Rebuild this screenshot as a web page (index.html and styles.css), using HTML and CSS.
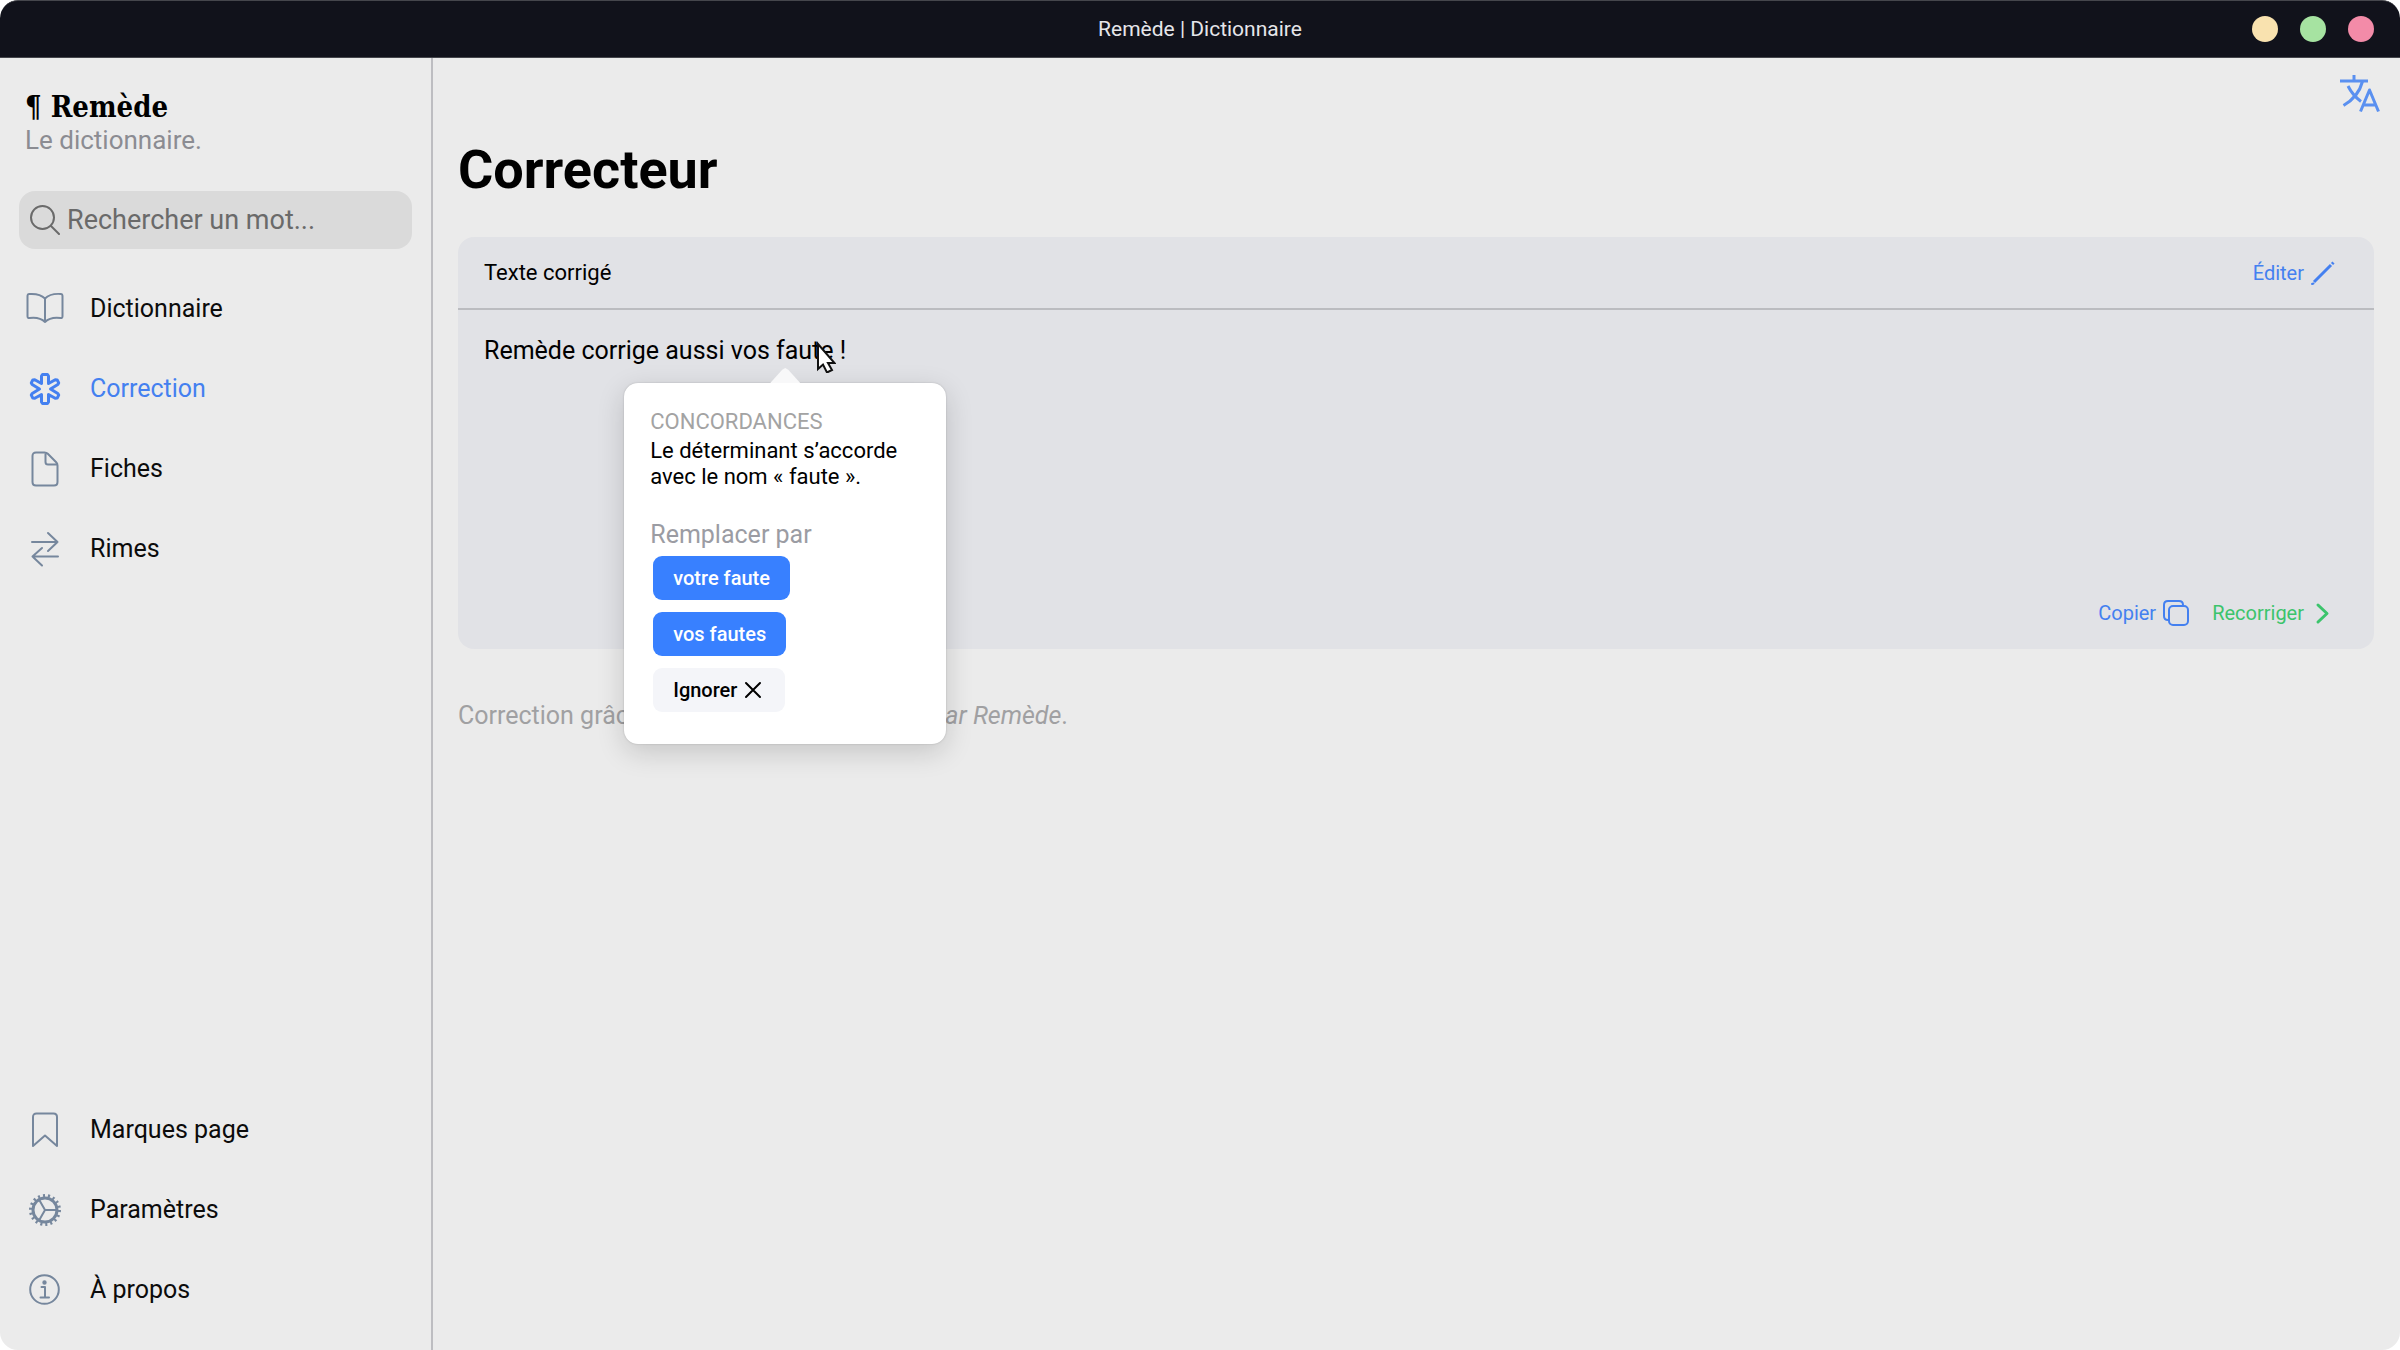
FILE: index.html
```html
<!DOCTYPE html>
<html lang="fr">
<head>
<meta charset="utf-8">
<meta name="viewport" content="width=device-width, initial-scale=1">
<title>Remède | Dictionnaire</title>
<link rel="stylesheet" href="styles.css">
</head>
<body>
<div class="window">
  <header class="titlebar">
    <span class="titlebar-title">Remède | Dictionnaire</span>
    <div class="window-controls">
      <button type="button" class="dot dot-yellow" aria-label="Réduire"></button>
      <button type="button" class="dot dot-green" aria-label="Agrandir"></button>
      <button type="button" class="dot dot-pink" aria-label="Fermer"></button>
    </div>
  </header>
  <div class="app">
    <aside class="sidebar">
      <div class="brand">
        <div class="brand-name">¶ Remède</div>
        <div class="brand-tagline">Le dictionnaire.</div>
      </div>
      <label class="search">
        <svg class="search-icon" viewBox="0 0 30 30" aria-hidden="true"><circle cx="12.500" cy="12.500" r="11.500"/><path d="M21 21l8 8"/></svg>
        <input class="search-input" type="search" placeholder="Rechercher un mot..." aria-label="Rechercher un mot">
      </label>
      <nav class="nav">
        <a class="nav-item" href="#dictionnaire">
          <svg class="nav-icon" viewBox="0 0 38 38" aria-hidden="true"><path d="M19 8.500C15.500 5 9 3.500 3 4c-1 .1-1.500.7-1.500 1.700v20.600c0 1.200.7 1.900 2 1.700C9 27.300 15.500 28.500 19 32c3.500-3.500 10-4.700 15.500-4 1.300.2 2-.5 2-1.700V5.700c0-1-.5-1.600-1.500-1.700-6-.5-12.500 1-16 4.500zM19 8.500V32"/></svg>
          <span>Dictionnaire</span>
        </a>
        <a class="nav-item is-active" href="#correction">
          <svg class="nav-icon" viewBox="0 0 38 38" aria-hidden="true"><path d="M16.500 4.500h5l1 1.500v7.500l6.700-3.800 2 .2 1.500 3-.9 1.600-7.300 4.500 7.300 4.500.9 1.600-1.500 3-2 .2-6.700-3.800V32l-1 1.500h-5l-1-1.500v-7.500l-6.700 3.800-2-.2-1.500-3 .9-1.600 7.300-4.500-7.300-4.500-.9-1.600 1.500-3 2-.2 6.700 3.800V6z"/></svg>
          <span>Correction</span>
        </a>
        <a class="nav-item" href="#fiches">
          <svg class="nav-icon" viewBox="0 0 38 38" aria-hidden="true"><path d="M10 2.500h8.500c1.500 0 2.300.3 3.300 1.300l8.400 8.400c1 1 1.300 1.800 1.300 3.300V32c0 2.300-1.200 3.500-3.500 3.500H10c-2.300 0-3.500-1.200-3.500-3.500V6c0-2.300 1.200-3.500 3.500-3.500zM19.500 3v9c0 1.700.8 2.500 2.500 2.500h9"/></svg>
          <span>Fiches</span>
        </a>
        <a class="nav-item" href="#rimes">
          <svg class="nav-icon" viewBox="0 0 38 38" aria-hidden="true"><path d="M6 12h25.500M22 3l9.500 9-9.500 9M32 26.500H6.500M16 18l-9.500 8.500 9.500 9"/></svg>
          <span>Rimes</span>
        </a>
      </nav>
      <nav class="nav nav-bottom">
        <a class="nav-item" href="#marques">
          <svg class="nav-icon" viewBox="0 0 38 38" aria-hidden="true"><path d="M10.500 2.500h17c2.300 0 3.500 1.200 3.500 3.500v29L19 24.500 7 35V6c0-2.300 1.200-3.500 3.500-3.500z"/></svg>
          <span>Marques page</span>
        </a>
        <a class="nav-item" href="#parametres">
          <svg class="nav-icon" viewBox="0 0 38 38" aria-hidden="true"><circle class="gear-ring" cx="19" cy="19" r="12"/><circle class="gear-teeth" cx="19" cy="19" r="14"/><path d="M19 19h12M19 19l-6-10.500M19 19l-6 10.500"/></svg>
          <span>Paramètres</span>
        </a>
        <a class="nav-item" href="#a-propos">
          <svg class="nav-icon" viewBox="0 0 38 38" aria-hidden="true"><circle cx="18.500" cy="18.500" r="14.300"/><path d="M15.500 16H19v10.500M14.500 26.500h8.500"/><circle class="icon-fill" cx="18.500" cy="11.500" r="1.200"/></svg>
          <span>À propos</span>
        </a>
      </nav>
    </aside>
    <main class="content">
      <div class="toolbar">
        <button type="button" class="lang-button" aria-label="Langue">
          <svg class="lang-icon" viewBox="0 0 40 40" aria-hidden="true"><path d="M0 7h28M14 1v6M22.500 7.500C20 17 13 26 3.500 31.500M8 12c3 6 7 11 13 15.500M20.500 37.500l9-21.500 9 21.500M23.500 31h12.500"/></svg>
        </button>
      </div>
      <h1 class="page-title">Correcteur</h1>
      <section class="card">
        <div class="card-header">
          <h2 class="card-title">Texte corrigé</h2>
          <button type="button" class="text-button">Éditer
            <svg class="edit-icon" viewBox="0 0 26 26" aria-hidden="true"><path class="edit-stroke" d="M4 22L21 5"/><path class="edit-stroke" d="M22 4l1.500-1.500"/><path d="M2 24l1.500-.5"/></svg>
          </button>
        </div>
        <div class="card-body">
          <p class="corrected-text">Remède corrige aussi <span class="mistake">vos faute&nbsp;<svg class="cursor" viewBox="0 0 20 32" aria-hidden="true"><path d="M2 3v25l5-4.500 4 8 5-2.500-4-7h6.500z"/></svg><span class="popover" role="dialog" aria-label="Concordances">
            <span class="popover-type">CONCORDANCES</span>
            <span class="popover-message">Le déterminant s’accorde avec le nom « faute ».</span>
            <span class="popover-label">Remplacer par</span>
            <button type="button" class="chip chip-primary">votre faute</button>
            <button type="button" class="chip chip-primary">vos fautes</button>
            <button type="button" class="chip">Ignorer <svg class="close-icon" viewBox="0 0 24 24" aria-hidden="true"><path d="M5 5l14 14M19 5L5 19"/></svg></button>
          </span></span>!</p>
        </div>
        <div class="card-footer">
          <button type="button" class="text-button">Copier
            <svg class="copy-icon" viewBox="0 0 28 28" aria-hidden="true"><rect x="7" y="7" width="19" height="19" rx="4"/><path d="M21 6.500V6c0-2.500-1.500-4-4-4H6C3.500 2 2 3.500 2 6v11c0 2.500 1.500 4 4 4h.5"/></svg>
          </button>
          <button type="button" class="text-button text-button-success">Recorriger
            <svg class="chevron-icon" viewBox="0 0 26 26" aria-hidden="true"><path d="M8 5l9 8.500L8 22"/></svg>
          </button>
        </div>
      </section>
      <p class="credit">Correction grâce à <em>Grammalecte, configuré par Remède</em>.</p>
    </main>
  </div>
</div>
</body>
</html>
```
FILE: styles.css
```css
*, *::before, *::after { box-sizing: border-box; }

body {
  margin: 0;
  background: #fff;
  color: #000;
  font: 25px/32px Roboto, "Liberation Sans", sans-serif;
}

h1, h2, p { margin: 0; }

button {
  padding: 0;
  border: 0;
  background: none;
  color: inherit;
  font: inherit;
  cursor: pointer;
}

svg {
  display: block;
  flex: none;
  fill: none;
  stroke: currentColor;
  stroke-width: 2;
  stroke-linecap: round;
  stroke-linejoin: round;
}

.window {
  display: flex;
  flex-direction: column;
  min-height: 100vh;
  border-radius: 18px;
  background: #ebebeb;
  overflow: hidden;
}

/* Title bar */
.titlebar {
  display: grid;
  grid-template-columns: 1fr auto 1fr;
  align-items: center;
  height: 58px;
  padding: 0 26px;
  border-top: 1px solid #45464c;
  border-bottom: 1px solid #45464c;
  border-radius: 18px 18px 0 0;
  background: #11121b;
}

.titlebar-title {
  grid-column: 2;
  color: #e6e6ea;
  font-size: 21px;
}

.window-controls {
  display: flex;
  justify-content: flex-end;
  gap: 22px;
}

.dot {
  width: 26px;
  height: 26px;
  border-radius: 50%;
}

.dot-yellow { background: #f9e2af; }
.dot-green { background: #a6e3a1; }
.dot-pink { background: #f38ba8; }

.app {
  display: flex;
  flex: 1;
}

/* Sidebar */
.sidebar {
  display: flex;
  flex-direction: column;
  flex: none;
  width: 433px;
  padding: 32px 19px 20px;
  border-right: 2px solid #bdbdc1;
}

.brand {
  padding: 0 6px;
  margin-bottom: 35px;
}

.brand-name {
  font: bold 29px/34px "DejaVu Serif Condensed", "DejaVu Serif", serif;
}

.brand-tagline {
  color: #8b8c92;
  font-size: 26px;
}

.search {
  display: flex;
  align-items: center;
  gap: 7px;
  height: 58px;
  padding: 0 11px;
  margin-bottom: 20px;
  border-radius: 16px;
  background: #dadada;
  color: #6a6a6a;
}

.search-icon {
  width: 30px;
  height: 30px;
}

.search-input {
  flex: 1;
  min-width: 0;
  padding: 0;
  border: 0;
  outline: 0;
  background: none;
  color: #000;
  font: 27px/32px Roboto, "Liberation Sans", sans-serif;
}

.search-input::placeholder {
  color: #6a6a6a;
  opacity: 1;
}

.nav-bottom { margin-top: auto; }

.nav-item {
  display: flex;
  align-items: center;
  gap: 26px;
  height: 80px;
  padding: 0 7px;
  color: #0c0c0c;
  text-decoration: none;
}

.nav-icon {
  width: 38px;
  height: 38px;
  color: #76879d;
}

.icon-fill { fill: currentColor; }

.gear-ring { stroke-width: 3; }

.gear-teeth {
  stroke-width: 4;
  stroke-linecap: butt;
  stroke-dasharray: 2 2.888;
}

.is-active,
.is-active .nav-icon { color: #4480f0; }

.is-active .nav-icon { stroke-width: 3; }

/* Main content */
.content {
  flex: 1;
  padding: 16px 26px 16px 25px;
}

.toolbar {
  display: flex;
  justify-content: flex-end;
}

.lang-button { margin-right: -6px; }

.lang-icon {
  width: 40px;
  height: 40px;
  color: #5a90f0;
  stroke-width: 3;
  stroke-linecap: butt;
}

.page-title {
  margin: 24px 0 35px;
  font-size: 54px;
  line-height: 64px;
}

.card {
  display: flex;
  flex-direction: column;
  min-height: 412px;
  border-radius: 16px;
  background: #e1e2e6;
}

.card-header {
  display: flex;
  align-items: center;
  justify-content: space-between;
  height: 73px;
  padding: 0 38px 0 26px;
  border-bottom: 2px solid #bbbcc0;
}

.card-title {
  font-size: 22px;
  font-weight: 400;
}

.card-body {
  flex: 1;
  padding: 25px 26px;
}

.card-footer {
  display: flex;
  justify-content: flex-end;
  gap: 22px;
  padding: 0 38px 20px;
}

.text-button {
  display: flex;
  align-items: center;
  gap: 6px;
  color: #4480f0;
  font-size: 20px;
}

.text-button-success { color: #3cc46c; }

.edit-icon { width: 26px; height: 26px; }
.edit-stroke { stroke-width: 3; stroke-linecap: butt; }
.copy-icon { width: 28px; height: 28px; }
.chevron-icon { width: 26px; height: 26px; stroke-width: 3; }

.mistake {
  position: relative;
}

.cursor {
  position: absolute;
  top: 5px;
  right: 4px;
  z-index: 3;
  width: 20px;
  height: 32px;
  fill: #fff;
  stroke: #111;
  stroke-linejoin: miter;
}

/* Suggestion popover, centred under the marked words */
.popover {
  position: absolute;
  top: 100%;
  left: 50%;
  z-index: 2;
  display: flex;
  flex-direction: column;
  align-items: flex-start;
  width: 322px;
  margin-top: 18px;
  padding: 23px 26px 20px;
  border-radius: 14px;
  background: #fff;
  box-shadow: 0 8px 28px rgba(0, 0, 0, .16), 0 0 2px rgba(0, 0, 0, .2);
  transform: translateX(-50%);
}

.popover::before {
  content: "";
  position: absolute;
  bottom: 100%;
  left: 50%;
  width: 30px;
  height: 15px;
  margin-left: -15px;
  background: #f8f8f9;
  clip-path: polygon(0 100%, 40% 12%, 50% 0, 60% 12%, 100% 100%);
}

.popover-type {
  color: #a3a3a3;
  font-size: 22px;
}

.popover-message {
  margin-bottom: 29px;
  font-size: 22px;
  line-height: 26px;
}

.popover-label {
  margin-bottom: 5px;
  color: #9b9ca3;
}

.chip {
  display: flex;
  align-items: center;
  gap: 4px;
  height: 44px;
  padding: 0 20px;
  margin: 0 3px 12px;
  border-radius: 9px;
  background: #f4f5f9;
  font-size: 20px;
  font-weight: 500;
}

.chip-primary {
  background: #3880ff;
  color: #fff;
}

.close-icon { width: 24px; height: 24px; }

.credit {
  margin-top: 51px;
  color: #a0a0a2;
}
```
